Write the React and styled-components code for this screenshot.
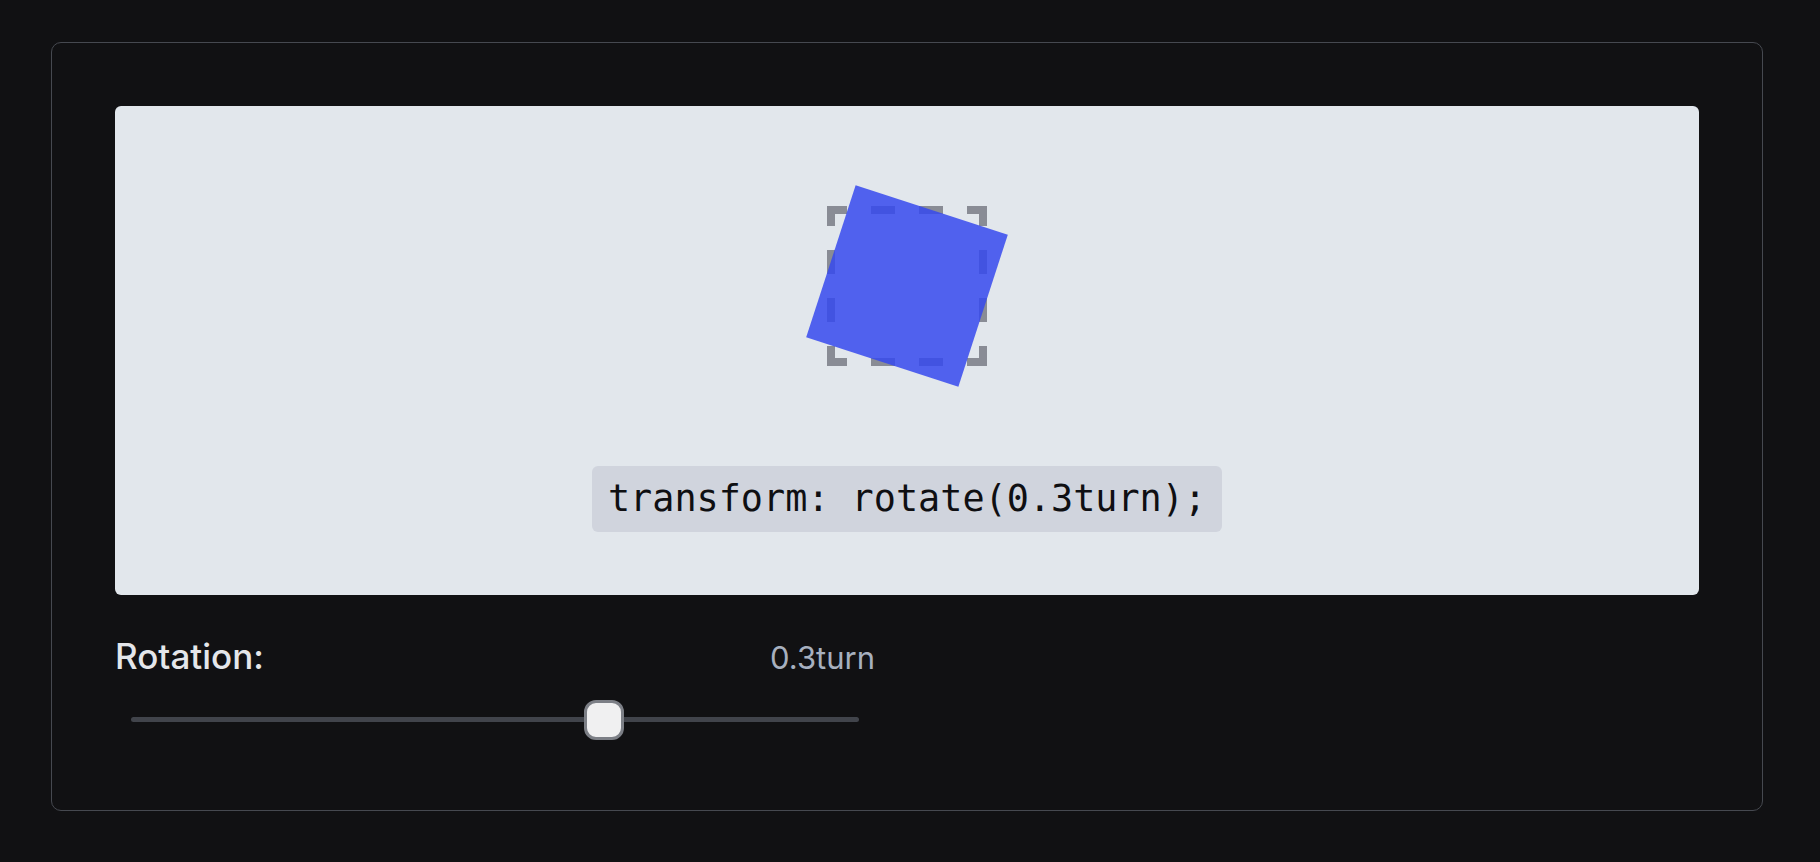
import React from "react";
import styled, { createGlobalStyle } from "styled-components";

const GlobalStyle = createGlobalStyle`
  html, body { margin: 0; padding: 0; background: #111113; }
  body { font-family: Inter, "Noto Sans", sans-serif; }
  *, *::before, *::after { box-sizing: border-box; }
`;

const Page = styled.main`
  min-height: 862px;
  padding: 42px 57px 0 51px;
`;

const Card = styled.section`
  width: 1712px;
  border: 1px solid #464950;
  border-radius: 10px;
  padding: 63px;
`;

const Preview = styled.div`
  height: 489px;
  background: #e2e7ec;
  border-radius: 6px;
  display: flex;
  flex-direction: column;
  align-items: center;
  padding-top: 100px;
  gap: 100px;
`;

const Stage = styled.div`
  position: relative;
  width: 160px;
  height: 160px;
  flex-shrink: 0;
`;

const Outline = styled.svg`
  position: absolute;
  inset: 0;
  width: 160px;
  height: 160px;
  fill: none;
  stroke: #898c95;
  stroke-width: 8;
  stroke-linecap: butt;
  stroke-linejoin: miter;
`;

const Box = styled.div`
  position: absolute;
  inset: 0;
  background: rgb(54, 73, 238);
  opacity: 0.85;
  transform: rotate(${(p) => p.$turn}turn);
`;

const Code = styled.code`
  font-family: "DejaVu Sans Mono", "Liberation Mono", monospace;
  font-size: 36.8px;
  line-height: 50px;
  padding: 8px 16px;
  background: #d0d4dd;
  color: #0f0f12;
  border-radius: 6px;
`;

const Controls = styled.div`
  display: grid;
  grid-template-columns: 1fr 1fr;
  column-gap: 64px;
  margin-top: 36px;
`;

const Control = styled.div`
  display: flex;
  flex-direction: column;
`;

const LabelRow = styled.div`
  display: flex;
  justify-content: space-between;
  align-items: baseline;
  line-height: 51px;
`;

const Label = styled.label`
  font-size: 35px;
  font-weight: 500;
  color: #e4e6ea;
`;

const Value = styled.span`
  font-size: 31px;
  font-weight: 400;
  color: #a7b0bf;
`;

const SliderWrap = styled.div`
  position: relative;
  height: 55px;
  margin: 9px 16px 0;
  display: flex;
  align-items: center;
`;

const Track = styled.div`
  width: 100%;
  height: 5px;
  border-radius: 3px;
  background: #41444b;
`;

const Thumb = styled.div`
  position: absolute;
  top: 50%;
  width: 40px;
  height: 40px;
  border: 3px solid #7c7f86;
  border-radius: 12px;
  background: #f0f0f1;
  transform: translate(-50%, -50%);
`;

const DASH_PATH = [
  "M4 20V4H20",
  "M140 4H156V20",
  "M156 140V156H140",
  "M20 156H4V140",
  "M44 4H68M92 4H116",
  "M44 156H68M92 156H116",
  "M4 44V68M4 92V116",
  "M156 44V68M156 92V116",
].join(" ");

export default function App() {
  const turn = 0.3;
  const min = -1;
  const max = 1;
  const pct = ((turn - min) / (max - min)) * 100;
  return (
    <>
      <GlobalStyle />
      <Page>
        <Card>
          <Preview>
            <Stage>
              <Outline viewBox="0 0 160 160" aria-hidden="true">
                <path d={DASH_PATH} />
              </Outline>
              <Box $turn={turn} />
            </Stage>
            <Code>transform: rotate({turn}turn);</Code>
          </Preview>
          <Controls>
            <Control>
              <LabelRow>
                <Label>Rotation:</Label>
                <Value>{turn}turn</Value>
              </LabelRow>
              <SliderWrap>
                <Track />
                <Thumb style={{ left: `${pct}%` }} />
              </SliderWrap>
            </Control>
          </Controls>
        </Card>
      </Page>
    </>
  );
}
